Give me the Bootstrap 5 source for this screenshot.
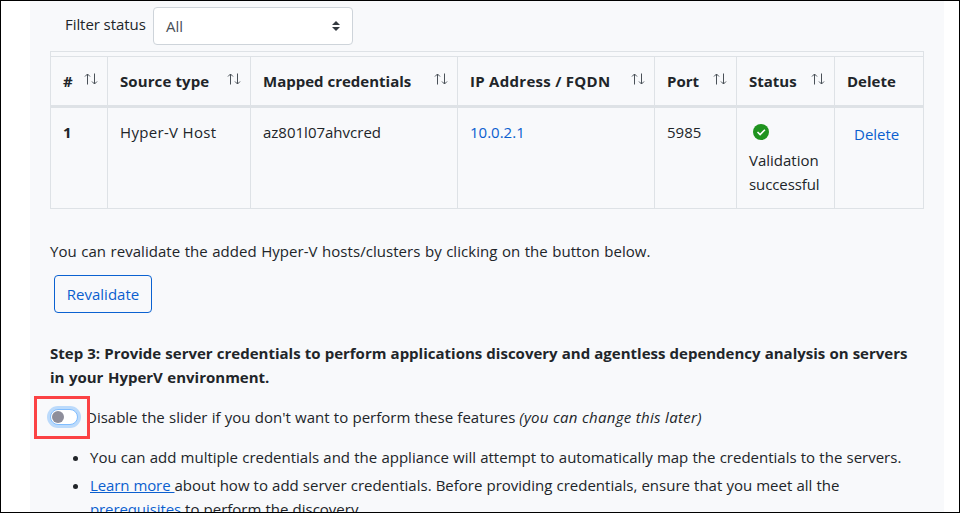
<!DOCTYPE html>
<html lang="en">
<head>
<meta charset="utf-8">
<meta name="viewport" content="width=device-width, initial-scale=1">
<title>Appliance configuration</title>
<link href="https://cdn.jsdelivr.net/npm/bootstrap@5.3.0/dist/css/bootstrap.min.css" rel="stylesheet">
<style>
body{font:15px/24px "Open Sans","Noto Sans",sans-serif;color:#212529;background:#fff}
.page-frame{height:513px;border:1px solid #000;padding:0 15px 0 29px}
.panel{background:#f8f9fb;height:511px;padding:6px 20px 0}
.filter-line{height:44px;padding-left:15px}
.filter-line label{width:88px;margin-top:5px}
.status-select{width:200px;height:38px;border:1px solid #ced4da;border-radius:4px;padding:0 12px;color:#495057}
.table-shell{border:1px solid #dee2e6;border-bottom:0;border-right:0;padding-top:4px;width:874px}
.shell-top{height:4px;margin-top:-4px;border-right:1px solid #dee2e6}
.host-table{width:873px;table-layout:fixed;border-collapse:separate;border-spacing:0}
.host-table th,.host-table td{padding:12px 0 0 12px;vertical-align:top;border-right:1px solid #dee2e6;border-bottom:1px solid #dee2e6;white-space:nowrap}
.host-table thead th{height:52px;border-top:1px solid #dee2e6;border-bottom-width:3px}
.host-table tbody th,.host-table tbody td{height:101px}
.host-table svg.sort{margin:4px 9px 0 0;flex:none}
.del-cell{padding:2px 0 0 7px}
.link-blue,a{color:#0b5fcf}
.intro{margin-top:30px}
.btn-reval{width:98px;height:38px;padding:0;margin:12px 0 0 4px;border:1px solid #0b62d1;border-radius:4px;color:#0b5fcf;font-size:15px;line-height:24px}
.step{margin-top:28px}
.slide-line{height:24px;margin-top:16px}
.slider{position:relative;width:56px;height:43px;margin:-9px 0 0 -16px;border:3px solid #fb4244;z-index:1}
.slider i{position:absolute;left:13px;top:10px;width:28px;height:16px;border-radius:8px;background:#fff;border:1px solid #80bdff;box-shadow:0 0 0 3px #bbdafb}
.slider i::after{content:"";position:absolute;left:1px;top:1px;width:12px;height:12px;border-radius:50%;background:#8e8e9b}
.slider-text{margin-left:-4px}
.notes{padding-left:40px;margin-top:16px}
.notes li{white-space:nowrap;margin-bottom:4px}
/* text fitting */
.t1{letter-spacing:-.07px}
.h2x{letter-spacing:.1px}
.h4x{letter-spacing:.28px}
.c2{letter-spacing:.33px}
.c6b{letter-spacing:-.1px}
.p1{word-spacing:.5px;letter-spacing:.048px}
.s1{word-spacing:.23px}
.s2{word-spacing:.6px}
.d1{word-spacing:.36px}
.d2{letter-spacing:.3px}
.l1{word-spacing:.3px}
.l2,.l3{word-spacing:.2px}
.l2 a,.l3 a{letter-spacing:-.1px}
</style>
<script src="https://cdn.jsdelivr.net/npm/bootstrap@5.3.0/dist/js/bootstrap.bundle.min.js"></script>
</head>
<body class="overflow-hidden">
<svg width="0" height="0" class="position-absolute"><defs><g id="sort" fill="none" stroke="#4a5158"><path d="M3.5 11.5V1M1 3.5 3.5 1 6 3.5M10.5 .5V11M8 8.5l2.5 2.5L13 8.5"/></g></defs></svg>
<main class="page-frame overflow-hidden">
<div class="panel overflow-hidden">
  <div class="filter-line d-flex align-items-start">
    <label class="text-nowrap"><span class="t1">Filter status</span></label>
    <div class="status-select bg-white d-flex align-items-center justify-content-between"><span>All</span>
      <svg width="8" height="10" viewBox="0 0 8 10"><path fill="#343a40" d="M0 4 4 0l4 4zM0 6l4 4 4-4z"/></svg></div>
  </div>
  <div class="table-shell">
    <div class="shell-top"></div>
    <table class="host-table">
      <colgroup><col style="width:57px"><col style="width:143px"><col style="width:207px"><col style="width:197px"><col style="width:82px"><col style="width:98px"><col style="width:89px"></colgroup>
      <thead><tr>
        <th><div class="d-flex justify-content-between"><span>#</span><svg class="sort" width="14" height="12"><use href="#sort"/></svg></div></th>
        <th><div class="d-flex justify-content-between"><span class="h2x">Source type</span><svg class="sort" width="14" height="12"><use href="#sort"/></svg></div></th>
        <th><div class="d-flex justify-content-between"><span>Mapped credentials</span><svg class="sort" width="14" height="12"><use href="#sort"/></svg></div></th>
        <th><div class="d-flex justify-content-between"><span class="h4x">IP Address / FQDN</span><svg class="sort" width="14" height="12"><use href="#sort"/></svg></div></th>
        <th><div class="d-flex justify-content-between"><span>Port</span><svg class="sort" width="14" height="12"><use href="#sort"/></svg></div></th>
        <th><div class="d-flex justify-content-between"><span>Status</span><svg class="sort" width="14" height="12"><use href="#sort"/></svg></div></th>
        <th>Delete</th>
      </tr></thead>
      <tbody><tr>
        <th>1</th><td><span class="c2">Hyper-V Host</span></td><td>az801l07ahvcred</td>
        <td><span class="link-blue">10.0.2.1</span></td><td>5985</td>
        <td><svg class="d-block ms-1 mt-1 mb-2" width="16" height="16" viewBox="0 0 16 16"><circle cx="8" cy="8" r="8" fill="#1f931f"/><path d="m4.5 8 2.6 2.6 4.8-4.9" fill="none" stroke="#fff" stroke-width="1.6"/></svg>Validation<br><span class="c6b">successful</span></td>
        <td><div class="del-cell"><span class="link-blue">Delete</span></div></td>
      </tr></tbody>
    </table>
  </div>
  <p class="intro mb-0 text-nowrap"><span class="p1">You can revalidate the added Hyper-V hosts/clusters by clicking on the button below.</span></p>
  <button type="button" class="btn btn-reval d-block">Revalidate</button>
  <div class="step fw-bold text-nowrap"><span class="s1">Step 3: Provide server credentials to perform applications discovery and agentless dependency analysis on servers</span><br><span class="s2">in your HyperV environment.</span></div>
  <div class="slide-line d-flex text-nowrap"><div class="slider flex-shrink-0"><i></i></div><div class="slider-text"><span class="d1">Disable the slider if you don't want to perform these features</span> <em class="d2">(you can change this later)</em></div></div>
  <ul class="notes mb-0">
    <li><span class="l1">You can add multiple credentials and the appliance will attempt to automatically map the credentials to the servers.</span></li>
    <li><span class="l2"><a href="#">Learn more </a>about how to add server credentials. Before providing credentials, ensure that you meet all the</span><br><span class="l3"><a href="#">prerequisites</a> to perform the discovery.</span></li>
  </ul>
</div>
</main>
</body>
</html>
